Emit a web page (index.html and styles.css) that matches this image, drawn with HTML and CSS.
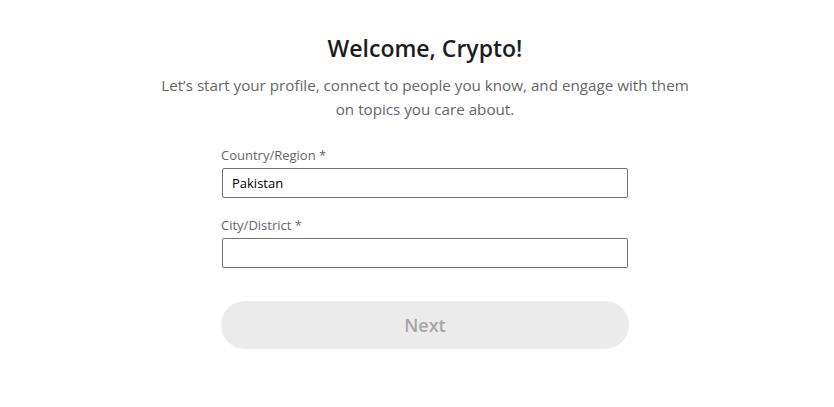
FILE: index.html
```html
<!DOCTYPE html>
<html lang="en">
<head>
    <meta charset="UTF-8">
    <meta name="viewport" content="width=device-width, initial-scale=1.0">
    <title>Welcome</title>
    <link rel="stylesheet" href="styles.css">
</head>
<body>

<div class="onboard">
    <h1 class="title">Welcome, Crypto!</h1>
    <p class="subtitle">Let’s start your profile, connect to people you know, and engage with them on topics you care about.</p>

    <form class="profile-form">
        <label class="field-label" for="country">Country/Region *</label>
        <input class="field-input" type="text" id="country" name="country" value="Pakistan">

        <label class="field-label" for="city">City/District *</label>
        <input class="field-input" type="text" id="city" name="city">

        <button class="next-btn" type="button" disabled>Next</button>
    </form>
</div>

</body>
</html>
```

FILE: styles.css
```css
body {
    margin: 0;
    padding-left: 16px;
    font-family: "Open Sans", Arial, sans-serif;
    background: #fff;
}
.onboard {
    display: flex;
    flex-direction: column;
    align-items: center;
    padding-top: 33px;
}
.title {
    margin: 0;
    font-size: 23px;
    line-height: 30px;
    font-weight: 600;
    color: #1d1d1d;
}
.subtitle {
    width: 536px;
    margin: 10px 0 0;
    font-size: 15.2px;
    line-height: 24px;
    color: #666;
    text-align: center;
}
.profile-form {
    width: 408px;
    margin-top: 25px;
    display: flex;
    flex-direction: column;
}
.field-label {
    font-size: 13px;
    line-height: 18px;
    color: #666;
    margin-bottom: 4px;
}
.field-input {
    height: 30px;
    box-sizing: border-box;
    margin: 0 1px 18px;
    padding: 0 9px;
    border: 1px solid #707070;
    border-radius: 2px;
    font-family: inherit;
    font-size: 13px;
    color: #000;
}
.next-btn {
    height: 48px;
    margin-top: 15px;
    border: none;
    border-radius: 24px;
    background: #ebebeb;
    color: #a6a6a6;
    font-family: inherit;
    font-size: 18px;
    font-weight: 600;
}
```
